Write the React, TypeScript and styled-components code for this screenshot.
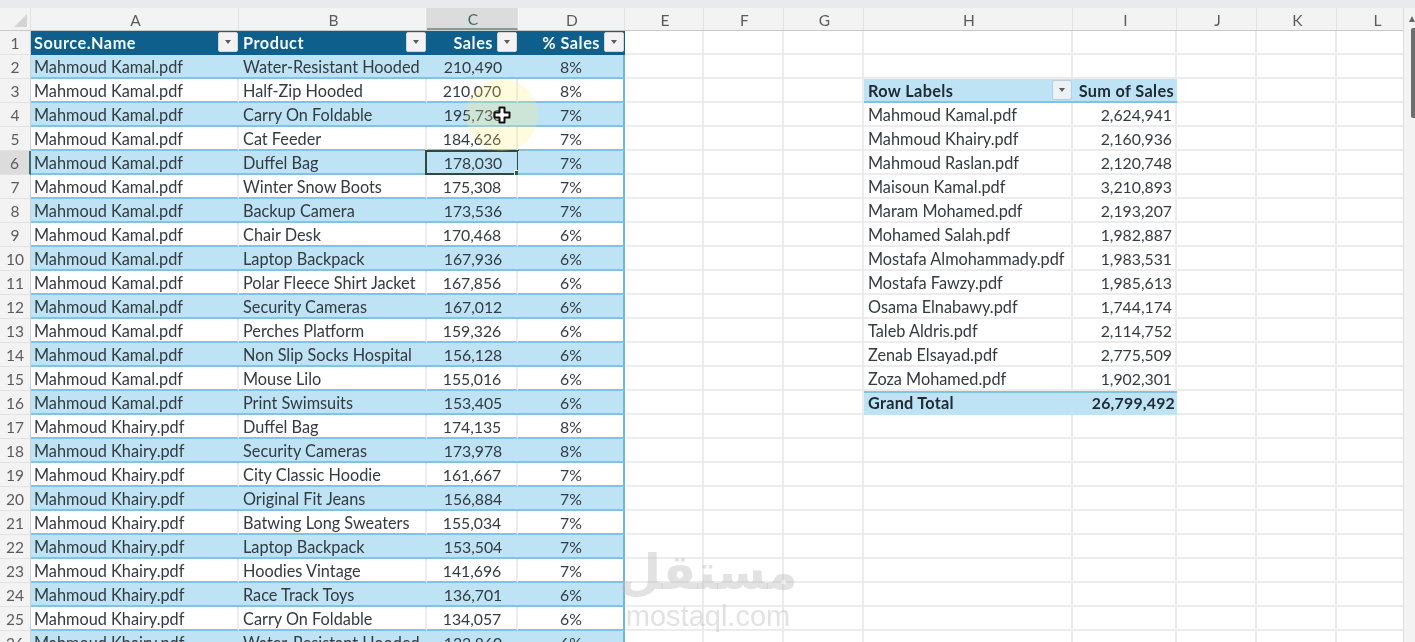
import React from 'react'
import styled, { createGlobalStyle } from 'styled-components'

const GlobalStyle = createGlobalStyle`
  html, body { margin: 0; padding: 0; background: #fff; overflow: hidden; }
  body { font-family: "Lato", "Liberation Sans", sans-serif; }
`

const COLUMNS = '31px 208px 188px 91px 107px 79px 80px 80px 209px 104px 80px 80px 80px'

const Page = styled.div`
  position: relative;
  width: 1415px;
  height: 642px;
  overflow: hidden;
  background: #fff;
  filter: blur(0.35px);
`

const TopStrip = styled.div`
  height: 8px;
  background: #e8eaed;
`

const HeaderRow = styled.div`
  display: grid;
  grid-template-columns: ${COLUMNS};
  height: 23px;
  background: #f3f3f3;
  border-bottom: 1px solid #c9c9c9;
  box-sizing: border-box;
`

const ColHead = styled.div<{ $active?: boolean }>`
  display: flex;
  align-items: center;
  justify-content: center;
  padding: 1px 0 0 2px;
  font-size: 15.5px;
  color: ${p => (p.$active ? '#3f6b5c' : '#5c5c5c')};
  background: ${p => (p.$active ? '#dcdcdc' : 'transparent')};
  border-right: 1px solid #e2e2e2;
  border-bottom: ${p => (p.$active ? '2px solid #8a9a94' : 'none')};
`

const Corner = styled.div`
  position: relative;
  border-right: 1px solid #e2e2e2;
  &::after {
    content: '';
    position: absolute;
    right: 3px;
    bottom: 3px;
    border-style: solid;
    border-width: 0 0 13px 13px;
    border-color: transparent transparent #d4d4d4 transparent;
  }
`

const Row = styled.div`
  display: grid;
  grid-template-columns: ${COLUMNS};
  height: 24px;
`

const RowHead = styled.div<{ $active?: boolean }>`
  display: flex;
  align-items: center;
  justify-content: center;
  box-sizing: border-box;
  padding-top: 1px;
  font-size: 15.5px;
  color: #5c5c5c;
  background: ${p => (p.$active ? '#dcdcdc' : '#f3f3f3')};
  border-bottom: 1px solid #e2e2e2;
  border-right: ${p => (p.$active ? '2px solid #3f6b72' : '1px solid #cfcfcf')};
`

type Tone = 'plain' | 'band' | 'white' | 'head' | 'pivotHead' | 'pivotTotal'

const backgrounds: Record<Tone, string> = {
  plain: '#fff',
  white: '#fff',
  band: '#bde3f5',
  head: '#0f5f8d',
  pivotHead: '#bde3f5',
  pivotTotal: '#bde3f5',
}

const bottoms: Record<Tone, string> = {
  plain: '#ececec',
  white: '#83c3e2',
  band: '#83c3e2',
  head: '#0f5f8d',
  pivotHead: '#83c3e2',
  pivotTotal: '#bde3f5',
}

const spacing: Record<Tone, string> = {
  plain: '0',
  white: '0',
  band: '0',
  head: '0.5px',
  pivotHead: '0.35px',
  pivotTotal: '0.25px',
}

const isBold = (tone?: Tone) => tone === 'head' || tone === 'pivotHead' || tone === 'pivotTotal'

const cellFontSize = (tone: Tone | undefined, num?: boolean, center?: boolean) => {
  if (tone === 'head' || tone === 'pivotHead') return '16.3px'
  return num || center ? '15.8px' : '16.3px'
}

const Cell = styled.div<{
  $tone?: Tone
  $num?: boolean
  $center?: boolean
  $lastCol?: boolean
  $filtered?: boolean
  $first?: boolean
}>`
  position: relative;
  display: flex;
  align-items: center;
  justify-content: ${p => (p.$center ? 'center' : p.$num ? 'flex-end' : 'flex-start')};
  box-sizing: border-box;
  min-width: 0;
  padding: 1px ${p => (p.$filtered ? '25px' : p.$tone === 'pivotTotal' && p.$num ? '2px' : '3px')} 0 ${p => (p.$first ? '3px' : '4px')};
  white-space: nowrap;
  font-size: ${p => cellFontSize(p.$tone, p.$num, p.$center)};
  letter-spacing: ${p => spacing[p.$tone || 'plain']};
  color: ${p => (p.$tone === 'head' ? '#f2f7fa' : isBold(p.$tone) ? '#1f2a33' : '#333a40')};
  font-weight: ${p => (isBold(p.$tone) ? 700 : 400)};
  background: ${p => backgrounds[p.$tone || 'plain']};
  border-bottom: 2px solid ${p => bottoms[p.$tone || 'plain']};
  border-right: ${p =>
    p.$lastCol
      ? '2px solid #6fb6d9'
      : isBold(p.$tone) || p.$tone === 'band'
        ? 'none'
        : '2px solid #ececec'};
  box-shadow: ${p => (p.$tone === 'pivotTotal' ? 'inset 0 2px 0 #83c3e2' : 'none')};
`

const SelectedFrame = styled.div`
  position: absolute;
  inset: -1px -1px -2px -2px;
  border: 2px solid #2d4a43;
  pointer-events: none;
  &::after {
    content: '';
    position: absolute;
    right: -4px;
    bottom: -4px;
    width: 5px;
    height: 5px;
    background: #2d5a52;
    border: 1px solid #fff;
  }
`

const FilterButton = styled.span<{ $soft?: boolean }>`
  position: absolute;
  right: 1px;
  top: 1px;
  width: 20px;
  height: 20px;
  display: flex;
  align-items: center;
  justify-content: center;
  box-sizing: border-box;
  background: ${p => (p.$soft ? '#eaf2f6' : '#f3f3f3')};
  border: 1px solid ${p => (p.$soft ? '#b4cfdd' : '#d5d5d5')};
  border-radius: 2px;
  &::after {
    content: '';
    border-style: solid;
    border-width: 4px 3.5px 0 3.5px;
    border-color: #5a5a5a transparent transparent transparent;
  }
`

const Halo = styled.div`
  position: absolute;
  left: 466px;
  top: 79px;
  width: 72px;
  height: 72px;
  border-radius: 50%;
  background: rgba(255, 240, 120, 0.24);
  pointer-events: none;
`

const CursorIcon = styled.svg`
  position: absolute;
  left: 493px;
  top: 106px;
  width: 18px;
  height: 18px;
  pointer-events: none;
`

const Watermark = styled.div`
  position: absolute;
  left: 622px;
  top: 545px;
  width: 172px;
  display: flex;
  flex-direction: column;
  align-items: center;
  color: rgba(190, 190, 190, 0.45);
  pointer-events: none;
`

const WatermarkArabic = styled.div`
  font-family: "DejaVu Sans", sans-serif;
  font-weight: 700;
  font-size: 49px;
  line-height: 56px;
  height: 56px;
`

const WatermarkLatin = styled.div`
  font-family: "Liberation Sans", sans-serif;
  font-size: 29px;
  line-height: 30px;
`

const ScrollRail = styled.div`
  position: absolute;
  left: 1403px;
  top: 8px;
  bottom: 0;
  width: 12px;
  background: #f3f3f3;
  border-left: 1px solid #dcdcdc;
  box-sizing: border-box;
`

const ScrollArrow = styled.div`
  position: absolute;
  right: 0;
  top: 8px;
  border-style: solid;
  border-width: 0 3px 6px 3px;
  border-color: transparent transparent #666 transparent;
`

const ScrollThumb = styled.div`
  position: absolute;
  right: 0;
  top: 20px;
  width: 4px;
  height: 90px;
  border-radius: 2px 0 0 2px;
  background: #6e6e6e;
`

const tableRows: [string, string, string, string][] = [
  ['Mahmoud Kamal.pdf', 'Water-Resistant Hooded', '210,490', '8%'],
  ['Mahmoud Kamal.pdf', 'Half-Zip Hooded', '210,070', '8%'],
  ['Mahmoud Kamal.pdf', 'Carry On Foldable', '195,730', '7%'],
  ['Mahmoud Kamal.pdf', 'Cat Feeder', '184,626', '7%'],
  ['Mahmoud Kamal.pdf', 'Duffel Bag', '178,030', '7%'],
  ['Mahmoud Kamal.pdf', 'Winter Snow Boots', '175,308', '7%'],
  ['Mahmoud Kamal.pdf', 'Backup Camera', '173,536', '7%'],
  ['Mahmoud Kamal.pdf', 'Chair Desk', '170,468', '6%'],
  ['Mahmoud Kamal.pdf', 'Laptop Backpack', '167,936', '6%'],
  ['Mahmoud Kamal.pdf', 'Polar Fleece Shirt Jacket', '167,856', '6%'],
  ['Mahmoud Kamal.pdf', 'Security Cameras', '167,012', '6%'],
  ['Mahmoud Kamal.pdf', 'Perches Platform', '159,326', '6%'],
  ['Mahmoud Kamal.pdf', 'Non Slip Socks Hospital', '156,128', '6%'],
  ['Mahmoud Kamal.pdf', 'Mouse Lilo', '155,016', '6%'],
  ['Mahmoud Kamal.pdf', 'Print Swimsuits', '153,405', '6%'],
  ['Mahmoud Khairy.pdf', 'Duffel Bag', '174,135', '8%'],
  ['Mahmoud Khairy.pdf', 'Security Cameras', '173,978', '8%'],
  ['Mahmoud Khairy.pdf', 'City Classic Hoodie', '161,667', '7%'],
  ['Mahmoud Khairy.pdf', 'Original Fit Jeans', '156,884', '7%'],
  ['Mahmoud Khairy.pdf', 'Batwing Long Sweaters', '155,034', '7%'],
  ['Mahmoud Khairy.pdf', 'Laptop Backpack', '153,504', '7%'],
  ['Mahmoud Khairy.pdf', 'Hoodies Vintage', '141,696', '7%'],
  ['Mahmoud Khairy.pdf', 'Race Track Toys', '136,701', '6%'],
  ['Mahmoud Khairy.pdf', 'Carry On Foldable', '134,057', '6%'],
  ['Mahmoud Khairy.pdf', 'Water-Resistant Hooded', '133,860', '6%'],
]

const pivotRows: [string, string][] = [
  ['Mahmoud Kamal.pdf', '2,624,941'],
  ['Mahmoud Khairy.pdf', '2,160,936'],
  ['Mahmoud Raslan.pdf', '2,120,748'],
  ['Maisoun Kamal.pdf', '3,210,893'],
  ['Maram Mohamed.pdf', '2,193,207'],
  ['Mohamed Salah.pdf', '1,982,887'],
  ['Mostafa Almohammady.pdf', '1,983,531'],
  ['Mostafa Fawzy.pdf', '1,985,613'],
  ['Osama Elnabawy.pdf', '1,744,174'],
  ['Taleb Aldris.pdf', '2,114,752'],
  ['Zenab Elsayad.pdf', '2,775,509'],
  ['Zoza Mohamed.pdf', '1,902,301'],
]

const columnLetters = ['A', 'B', 'C', 'D', 'E', 'F', 'G', 'H', 'I', 'J', 'K', 'L']

const PivotCells = ({ rowNumber }: { rowNumber: number }) => {
  if (rowNumber === 3) {
    return (
      <>
        <Cell $tone="pivotHead">
          Row Labels
          <FilterButton $soft />
        </Cell>
        <Cell $tone="pivotHead" $num>Sum of Sales</Cell>
      </>
    )
  }
  if (rowNumber === 16) {
    return (
      <>
        <Cell $tone="pivotTotal">Grand Total</Cell>
        <Cell $tone="pivotTotal" $num>26,799,492</Cell>
      </>
    )
  }
  const item = pivotRows[rowNumber - 4]
  if (item) {
    return (
      <>
        <Cell>{item[0]}</Cell>
        <Cell $num>{item[1]}</Cell>
      </>
    )
  }
  return (
    <>
      <Cell />
      <Cell />
    </>
  )
}

const App = () => {
  return (
    <Page>
      <GlobalStyle />
      <TopStrip />
      <HeaderRow>
        <Corner />
        {columnLetters.map(letter => (
          <ColHead key={letter} $active={letter === 'C'}>{letter}</ColHead>
        ))}
      </HeaderRow>

      <Row>
        <RowHead>1</RowHead>
        <Cell $tone="head" $first>Source.Name<FilterButton /></Cell>
        <Cell $tone="head">Product<FilterButton /></Cell>
        <Cell $tone="head" $num $filtered>Sales<FilterButton /></Cell>
        <Cell $tone="head" $num $filtered>% Sales<FilterButton /></Cell>
        <Cell /><Cell /><Cell /><Cell /><Cell /><Cell /><Cell /><Cell />
      </Row>

      {tableRows.map((row, i) => {
        const rowNumber = i + 2
        const tone: Tone = rowNumber % 2 === 0 ? 'band' : 'white'
        return (
          <Row key={rowNumber}>
            <RowHead $active={rowNumber === 6}>{rowNumber}</RowHead>
            <Cell $tone={tone} $first>{row[0]}</Cell>
            <Cell $tone={tone}>{row[1]}</Cell>
            <Cell $tone={tone} $center>
              {row[2]}
              {rowNumber === 6 && <SelectedFrame />}
            </Cell>
            <Cell $tone={tone} $center $lastCol>{row[3]}</Cell>
            <Cell /><Cell /><Cell />
            <PivotCells rowNumber={rowNumber} />
            <Cell /><Cell /><Cell />
          </Row>
        )
      })}

      <Halo />
      <CursorIcon viewBox="0 0 18 18">
        <path
          d="M6.5 1.5h5v5h5v5h-5v5h-5v-5h-5v-5h5z"
          fill="#fff"
          stroke="#111"
          strokeWidth="2"
          strokeLinejoin="round"
        />
      </CursorIcon>

      <Watermark>
        <WatermarkArabic dir="rtl" lang="ar">مستقل</WatermarkArabic>
        <WatermarkLatin>mostaql.com</WatermarkLatin>
      </Watermark>

      <ScrollRail>
        <ScrollArrow />
        <ScrollThumb />
      </ScrollRail>
    </Page>
  )
}

export default App
